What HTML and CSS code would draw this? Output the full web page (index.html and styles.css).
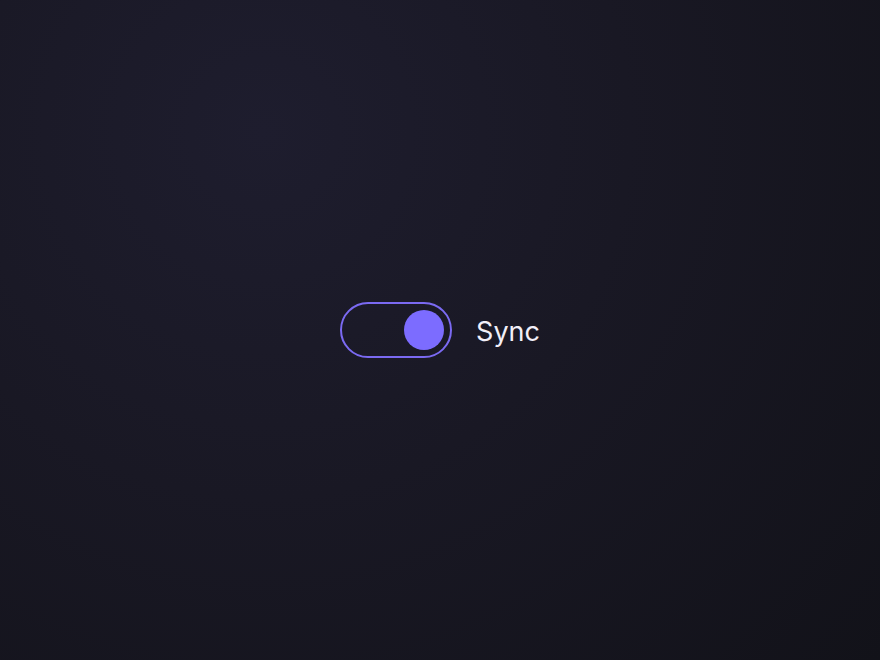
FILE: index.html
```html
<!DOCTYPE html>
<html lang="en">
<head>
<meta charset="utf-8">
<title>Sync toggle</title>
<link rel="stylesheet" href="styles.css">
</head>
<body>
<main class="stage">
  <label class="toggle-row">
    <span class="switch" role="switch" aria-checked="true">
      <span class="knob"></span>
    </span>
    <span class="label">Sync</span>
  </label>
</main>
</body>
</html>
```

FILE: styles.css
```css
html, body {
  margin: 0;
  height: 100%;
}
body {
  background: radial-gradient(circle at 30% 20%, #1e1d2e 0%, #191824 45%, #121219 100%);
  font-family: Inter, "Noto Sans", sans-serif;
}
.stage {
  height: 100%;
  display: flex;
  align-items: center;
  justify-content: center;
}
.toggle-row {
  display: flex;
  align-items: center;
  gap: 24px;
}
.switch {
  box-sizing: border-box;
  width: 112px;
  height: 56px;
  border: 2px solid #7b6af2;
  border-radius: 28px;
  padding: 6px;
  display: flex;
  justify-content: flex-end;
  align-items: center;
}
.knob {
  width: 40px;
  height: 40px;
  border-radius: 50%;
  background: #7c6cff;
}
.label {
  color: #f1eff8;
  font-size: 27px;
  line-height: 1;
  padding-top: 3px;
}
```
